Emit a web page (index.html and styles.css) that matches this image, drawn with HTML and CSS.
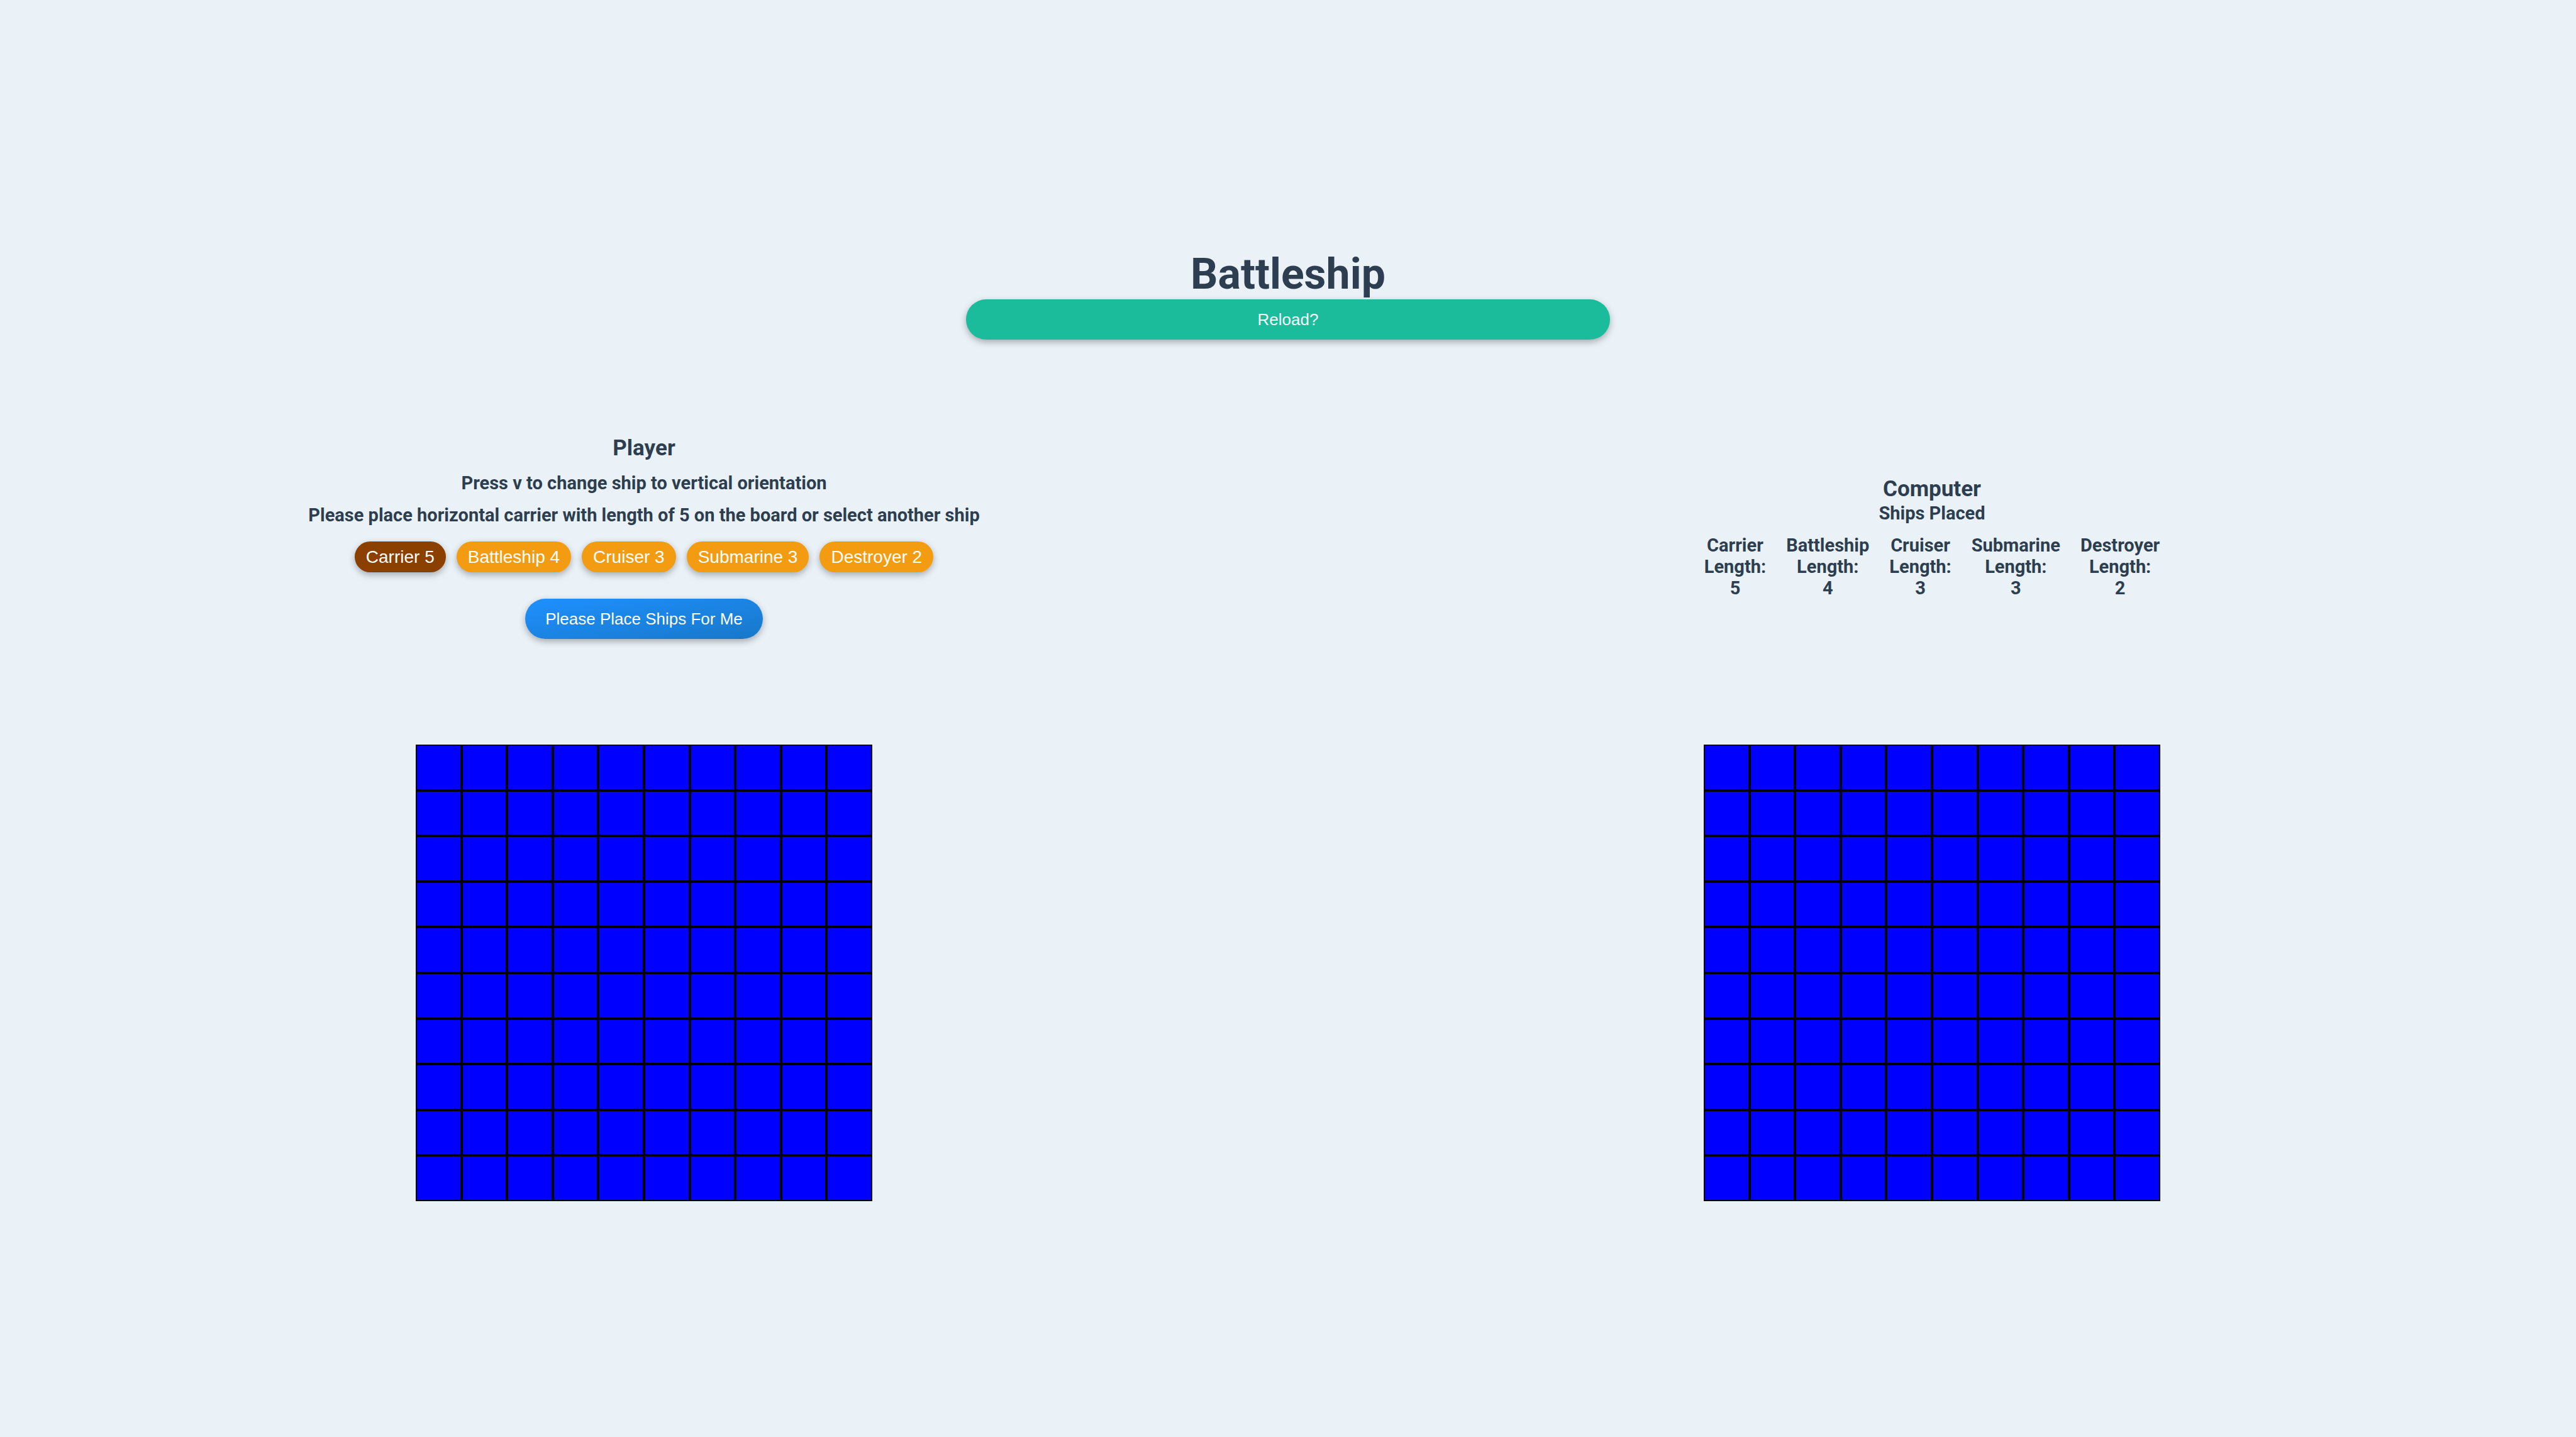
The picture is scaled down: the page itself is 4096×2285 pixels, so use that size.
FILE: index.html
```html
<!DOCTYPE html>
<html lang="en">
<head>
<meta charset="utf-8">
<title>Battleship</title>
<link rel="stylesheet" href="styles.css">
</head>
<body>
<main class="game">
  <header class="header">
    <h1 class="title">Battleship</h1>
    <button class="button button-reload" type="button">Reload?</button>
  </header>
  <section class="info">
    <div class="panel">
      <h2 class="name">Player</h2>
      <h3 class="message">Press v to change ship to vertical orientation</h3>
      <h3 class="message">Please place horizontal carrier with length of 5 on the board or select another ship</h3>
      <div class="ships">
        <button class="ship ship-selected" type="button">Carrier 5</button>
        <button class="ship" type="button">Battleship 4</button>
        <button class="ship" type="button">Cruiser 3</button>
        <button class="ship" type="button">Submarine 3</button>
        <button class="ship" type="button">Destroyer 2</button>
      </div>
      <button class="button button-random" type="button">Please Place Ships For Me</button>
    </div>
    <div class="panel">
      <h2 class="name">Computer</h2>
      <h3 class="subtitle">Ships Placed</h3>
      <ul class="fleet">
        <li>Carrier<br>Length:<br>5</li>
        <li>Battleship<br>Length:<br>4</li>
        <li>Cruiser<br>Length:<br>3</li>
        <li>Submarine<br>Length:<br>3</li>
        <li>Destroyer<br>Length:<br>2</li>
      </ul>
    </div>
  </section>
  <section class="boards">
    <div class="board"></div>
    <div class="board"></div>
  </section>
</main>
<script src="boards.js"></script>
</body>
</html>
```
FILE: styles.css
```css
* {
  box-sizing: border-box;
  margin: 0;
  padding: 0;
}

body {
  background: #eaf2f8;
  color: #2c3e50;
  font-family: Roboto, "Liberation Sans", sans-serif;
}

.game {
  display: flex;
  flex-direction: column;
  justify-content: center;
  min-height: 100vh;
  padding-top: 21px;
}

.header {
  display: flex;
  flex-direction: column;
  align-self: center;
  width: 25%;
  margin-bottom: 152px;
  text-align: center;
}

.title {
  font-size: 68px;
  line-height: 80px;
}

.button,
.ship {
  border: 0;
  border-radius: 32px;
  box-shadow: 0 4px 11px rgba(0, 0, 0, 0.3);
  color: #fff;
  font-family: "Liberation Sans", Arial, sans-serif;
  cursor: pointer;
}

.button {
  padding: 17px 32px;
  font-size: 26px;
  line-height: 30px;
}

.button-reload {
  background: #1abc9c;
}

.button-random {
  margin-top: 42px;
  background: linear-gradient(to bottom right, #1e90ff, #1878c8);
}

.info,
.boards {
  display: grid;
  grid-template-columns: 1fr 1fr;
  align-items: center;
  justify-items: center;
}

.info {
  margin-bottom: 168px;
}

.panel {
  display: flex;
  flex-direction: column;
  align-items: center;
  text-align: center;
}

.name {
  font-size: 35px;
  line-height: 42px;
}

.message,
.subtitle,
.fleet {
  font-size: 29px;
  font-weight: 700;
  line-height: 34px;
}

.message {
  margin-top: 17px;
}

.ships {
  display: flex;
  gap: 17px;
  margin-top: 25px;
}

.ship {
  padding: 8px 18px;
  background: #f39c12;
  font-size: 28px;
  line-height: 33px;
}

.ship-selected {
  background: #8b4000;
}

.fleet {
  display: flex;
  gap: 32px;
  margin-top: 17px;
  list-style: none;
}

.board {
  display: grid;
  grid-template-columns: repeat(10, 1fr);
  width: 726px;
  aspect-ratio: 1;
}

.cell {
  border: 2px solid #000;
  background: #00f;
}
```
FILE: boards.js
```js
document.querySelectorAll(".board").forEach((board) => {
  for (let i = 0; i < 100; i += 1) {
    const cell = document.createElement("div");
    cell.className = "cell";
    board.append(cell);
  }
});
```
